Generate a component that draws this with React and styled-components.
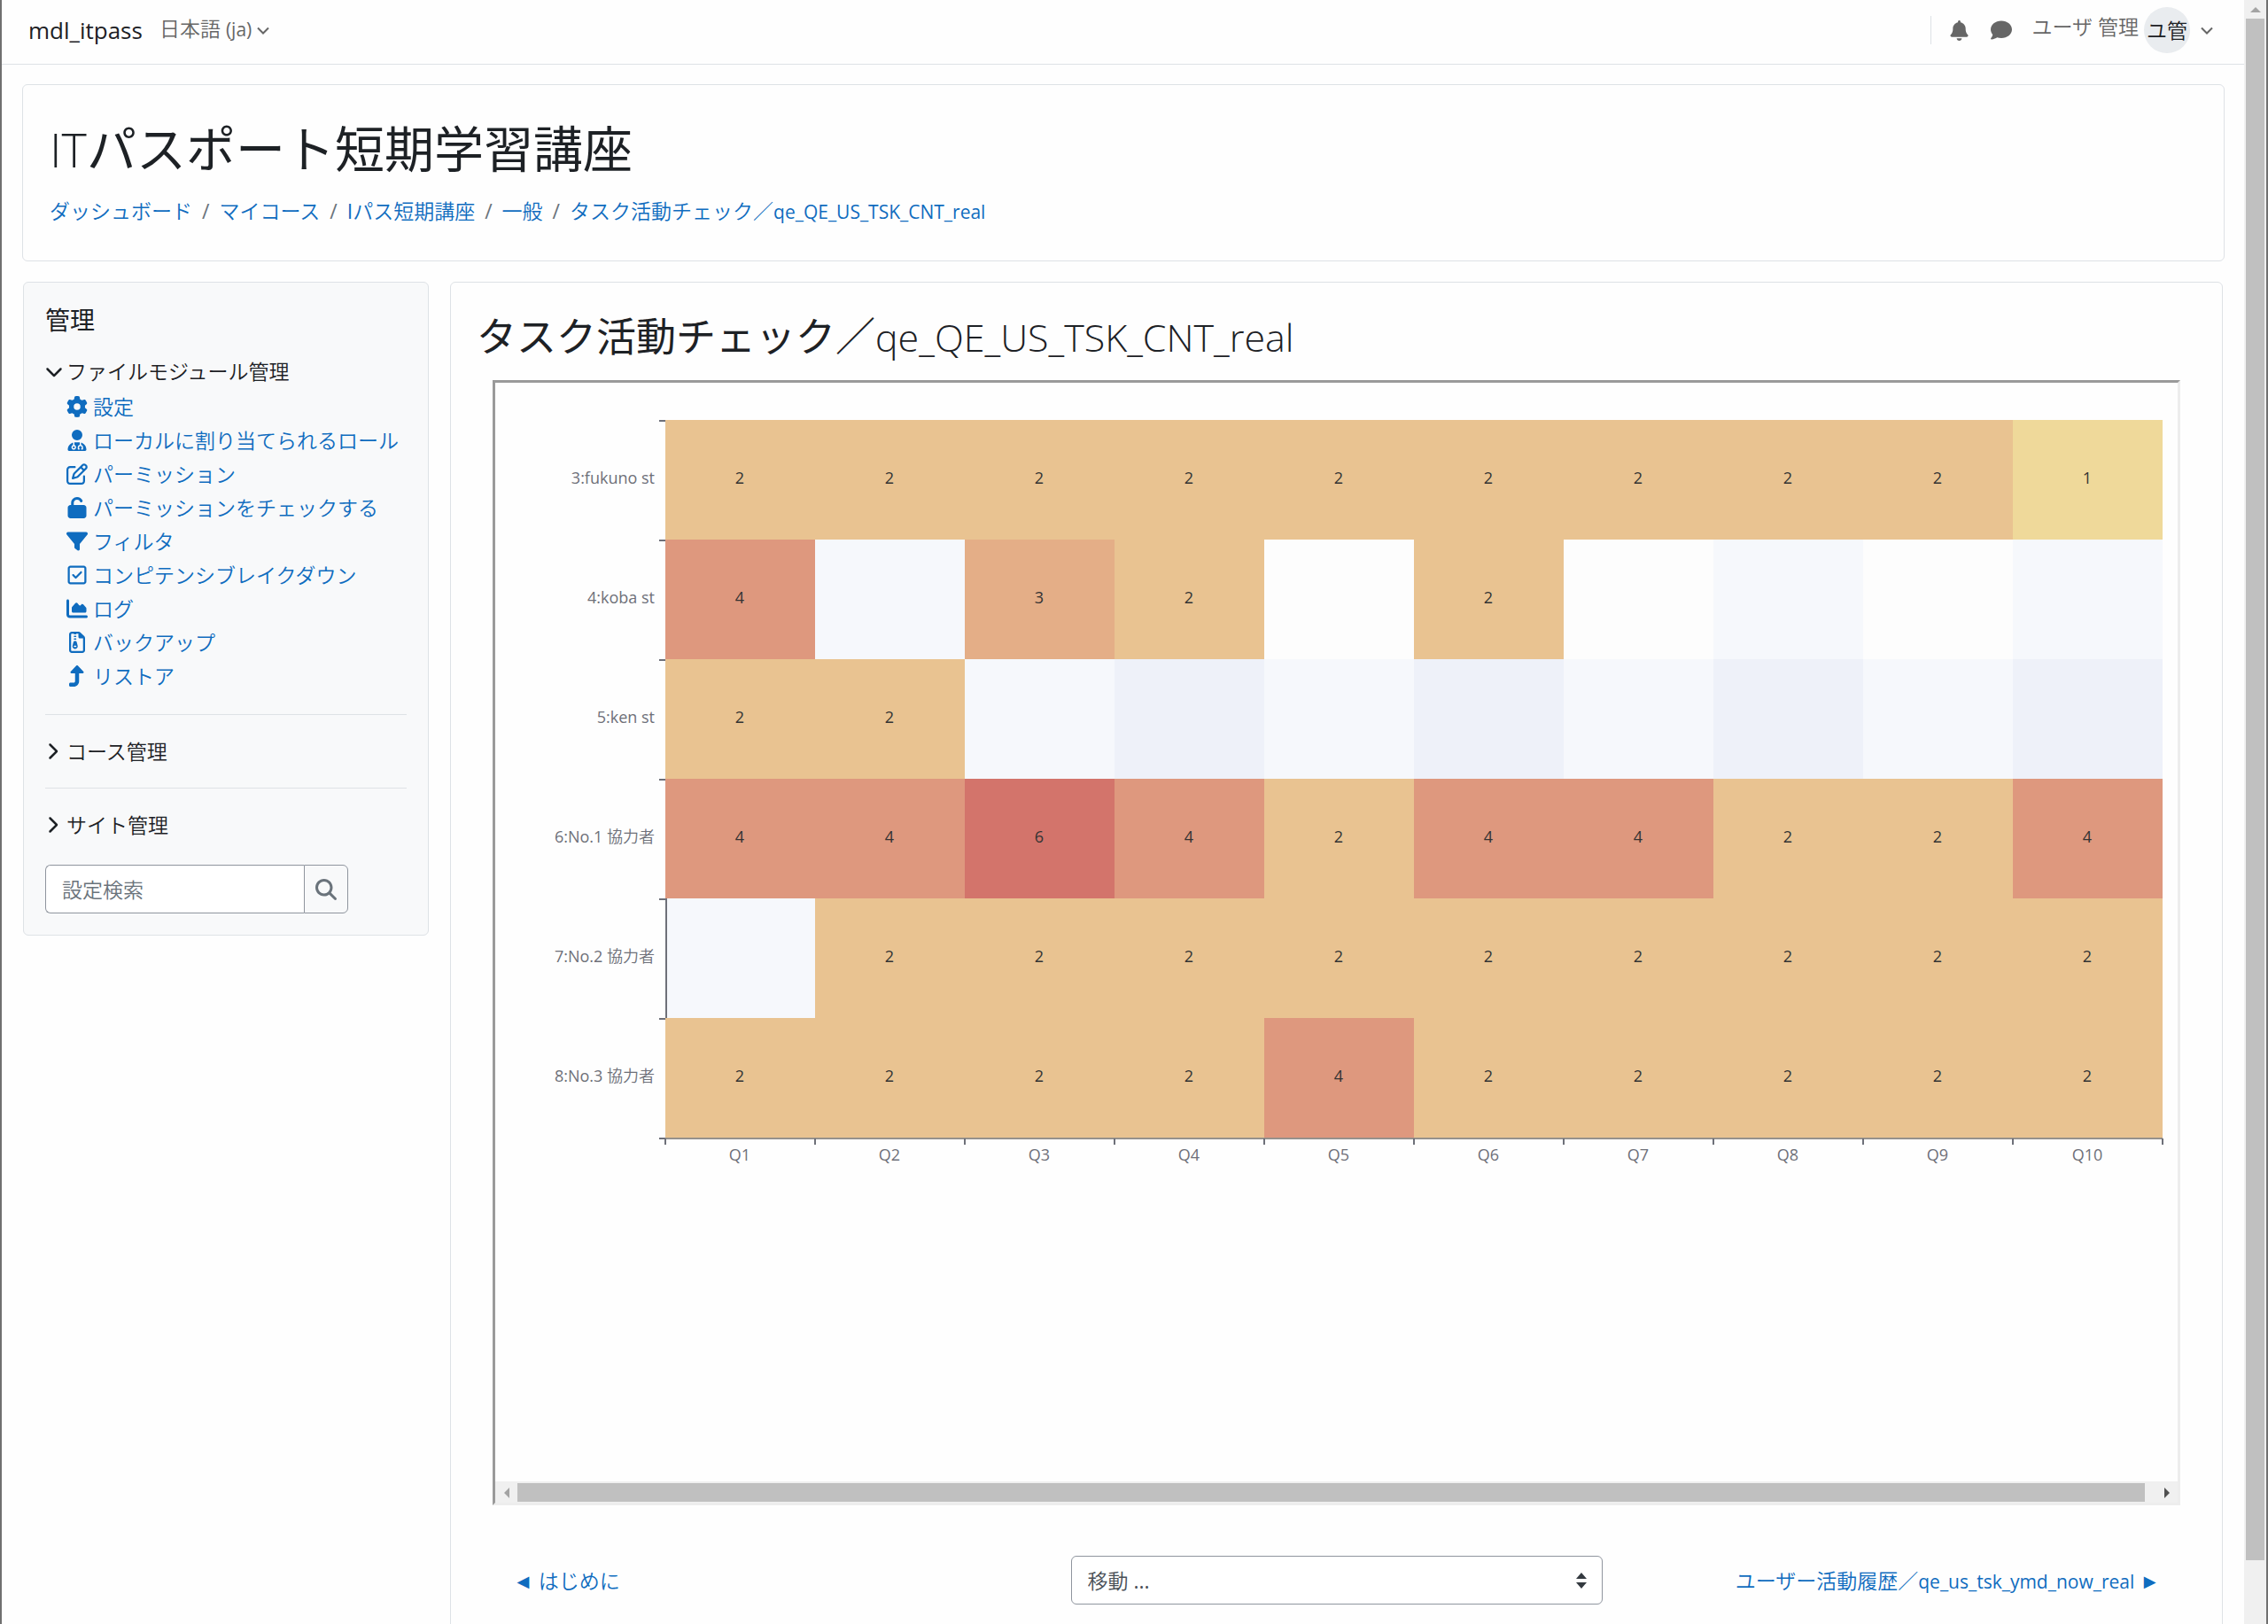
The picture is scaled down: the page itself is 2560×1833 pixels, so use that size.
import React from "react";
import styled, { createGlobalStyle } from "styled-components";
import {
  FaBell,
  FaChartArea,
  FaChevronDown,
  FaChevronRight,
  FaComment,
  FaFilter,
  FaGear,
  FaMagnifyingGlass,
  FaRegFileZipper,
  FaRegPenToSquare,
  FaRegSquareCheck,
  FaTurnUp,
  FaUnlock,
  FaUserDoctor,
} from "react-icons/fa6";

const fontStack = '"Open Sans", "Noto Sans CJK JP DemiLight", "Noto Sans CJK JP", sans-serif';
const headingStack = '"Open Sans", "Noto Sans CJK JP", sans-serif';
const color = {
  text: "#1d2125",
  muted: "#6a737b",
  nav: "#666666",
  link: "#0f6cbf",
  line: "#dee2e6",
  control: "#8f959e",
  track: "#f0f0f0",
  thumb: "#c0c0c0",
  axis: "#6e7079",
};

const GlobalStyle = createGlobalStyle`
  *, *::before, *::after { box-sizing: border-box; }
  body {
    margin: 0;
    background: #fefefe;
    color: ${color.text};
    font-family: ${fontStack};
    font-size: 23px;
    line-height: 34px;
  }
  button, input, select { font: inherit; color: inherit; margin: 0; }
  a { color: ${color.link}; text-decoration: none; }
  a:hover { text-decoration: underline; }
`;

const Window = styled.div`
  display: flex;
  height: 100vh;
  overflow: hidden;
  border: solid #707070;
  border-width: 0 2px;
`;

const Page = styled.div`
  flex: 1;
  min-width: 0;
`;

const PageScrollbar = styled.div`
  display: flex;
  flex-direction: column;
  width: 25px;
  padding: 0 2px 72px;
  background: ${color.track};
`;

const ScrollArrow = styled.span`
  display: flex;
  align-items: center;
  justify-content: center;
  flex: none;
  width: ${(p) => (p.$wide ? "25px" : "21px")};
  height: 21px;
`;

const ScrollThumb = styled.div`
  flex: 1;
  background: ${color.thumb};
`;

const Latin = styled.span`
  font-size: 21px;
  line-height: 1;
`;

const TopBar = styled.header`
  display: flex;
  align-items: center;
  justify-content: space-between;
  height: 73px;
  padding: 0 35px 4px 30px;
  border-bottom: 1px solid ${color.line};
`;

const BarGroup = styled.div`
  display: flex;
  align-items: center;
  gap: ${(p) => p.$gap}px;
`;

const Brand = styled.a`
  color: ${color.text};
  font-size: 26px;
`;

const MenuButton = styled.button`
  display: flex;
  align-items: center;
  gap: ${(p) => p.$gap}px;
  padding: 0;
  border: 0;
  background: none;
  color: ${color.nav};
  cursor: pointer;
`;

const MenuText = styled.span`
  padding-bottom: ${(p) => p.$lift}px;
`;

const IconBar = styled.div`
  display: flex;
  align-items: center;
  gap: 24px;
  height: 32px;
  padding-left: 20px;
  border-left: 1px solid ${color.line};
`;

const Avatar = styled.span`
  display: flex;
  align-items: center;
  justify-content: center;
  width: 52px;
  height: 52px;
  margin-right: 6px;
  border-radius: 50%;
  background: #e9ecef;
  color: ${color.text};
  white-space: nowrap;
`;

const Body = styled.div`
  padding: 22px 22px 0 23px;
`;

const Card = styled.section`
  border: 1px solid ${color.line};
  border-radius: 6px;
`;

const PageHeader = styled(Card)`
  height: 200px;
  padding: 37px 30px 0;
`;

const PageTitle = styled.h1`
  margin: 0 0 20px;
  font-family: ${headingStack};
  font-size: 56px;
  font-weight: 400;
  line-height: 68px;
`;

const Thin = styled.span`
  font-size: ${(p) => p.$size}px;
  font-weight: 300;
  line-height: 1;
`;

const Crumbs = styled.ol`
  display: flex;
  margin: 0;
  padding: 0;
  list-style: none;
`;

const Crumb = styled.li`
  & + &::before {
    content: "/";
    padding: 0 11px;
    color: ${color.muted};
  }
`;

const Columns = styled.div`
  display: grid;
  grid-template-columns: 458px minmax(0, 1fr);
  align-items: start;
  gap: 24px;
  padding: 23px 2px 0 1px;
`;

const Sidebar = styled(Card)`
  padding: 24px;
  background: #f8f9fa;
`;

const SideTitle = styled.h2`
  margin: 0 0 23px;
  font-family: ${headingStack};
  font-size: 28px;
  font-weight: 400;
  line-height: 36px;
`;

const TreeToggle = styled.button`
  display: flex;
  align-items: center;
  width: 100%;
  height: 34px;
  padding: 0;
  border: 0;
  background: none;
  cursor: pointer;
`;

const Chevron = styled.span`
  display: flex;
  align-items: center;
  width: 24px;
  svg {
    width: ${(p) => (p.$open ? "20px" : "16px")};
    height: 20px;
  }
`;

const TreeList = styled.ul`
  margin: 4px 0 0;
  padding: 0 0 0 24px;
  list-style: none;
`;

const TreeItem = styled.li`
  display: flex;
  height: 38px;
`;

const TreeLink = styled.a`
  display: flex;
  align-items: center;
  gap: 6px;
  white-space: nowrap;
`;

const Rule = styled.hr`
  margin: 24px 0;
  border: 0;
  border-top: 1px solid ${color.line};
`;

const SearchForm = styled.form`
  display: flex;
  width: 342px;
  height: 55px;
  margin-top: 28px;
`;

const SearchInput = styled.input`
  flex: 1;
  min-width: 0;
  padding: 0 18px;
  border: 1px solid ${color.control};
  border-right: 0;
  border-radius: 6px 0 0 6px;
  background: #fff;
  &::placeholder { color: ${color.muted}; opacity: 1; }
`;

const SearchButton = styled.button`
  display: flex;
  align-items: center;
  justify-content: center;
  width: 50px;
  padding: 0;
  border: 1px solid ${color.control};
  border-radius: 0 6px 6px 0;
  background: #f8f9fa;
  color: ${color.muted};
`;

const Main = styled(Card)`
  min-height: 1600px;
  padding: 32px 47px 0;
`;

const MainTitle = styled.h2`
  margin: 0 -18px 20px;
  font-family: ${headingStack};
  font-size: 45px;
  font-weight: 400;
  line-height: 58px;
`;

const Frame = styled.div`
  border: 3px solid;
  border-color: #9a9a9a #ededed #ededed #9a9a9a;
`;

const FrameScrollbar = styled.div`
  display: flex;
  height: 24px;
  padding: 2px 0 1px;
  background: ${color.track};
`;

const FrameTrack = styled.div`
  display: flex;
  flex: 1;
  padding-right: 12px;
`;

const Chart = styled.svg`
  display: block;
  width: 100%;
  height: auto;
  font-size: 18px;
  font-family: ${fontStack};
`;

const ActivityNav = styled.nav`
  display: grid;
  grid-template-columns: 1fr 600px 1fr;
  align-items: center;
  padding: 57px 23px 0;
`;

const NavCell = styled.div`
  text-align: ${(p) => p.$align};
  white-space: nowrap;
`;

const SelectBox = styled.div`
  position: relative;
`;

const JumpSelect = styled.select`
  display: block;
  width: 100%;
  height: 55px;
  padding: 0 18px;
  appearance: none;
  border: 1px solid ${color.control};
  border-radius: 6px;
  background: #fff;
  color: #495057;
`;

const SelectArrows = styled.svg`
  position: absolute;
  top: 19px;
  right: 18px;
  pointer-events: none;
`;

const adminLinks = [
  { icon: FaGear, label: "設定" },
  { icon: FaUserDoctor, label: "ローカルに割り当てられるロール" },
  { icon: FaRegPenToSquare, label: "パーミッション" },
  { icon: FaUnlock, label: "パーミッションをチェックする" },
  { icon: FaFilter, label: "フィルタ" },
  { icon: FaRegSquareCheck, label: "コンピテンシブレイクダウン" },
  { icon: FaChartArea, label: "ログ" },
  { icon: FaRegFileZipper, label: "バックアップ" },
  { icon: FaTurnUp, label: "リストア" },
];

const crumbs = [
  { label: "ダッシュボード" },
  { label: "マイコース" },
  { label: "Iパス短期講座" },
  { label: "一般" },
  { label: "タスク活動チェック／", latin: "qe_QE_US_TSK_CNT_real" },
];

const rows = [
  { name: "3:fukuno st", values: [2, 2, 2, 2, 2, 2, 2, 2, 2, 1] },
  { name: "4:koba st", values: [4, 0, 3, 2, 0, 2, 0, 0, 0, 0] },
  { name: "5:ken st", values: [2, 2, 0, 0, 0, 0, 0, 0, 0, 0] },
  { name: "6:No.1 協力者", values: [4, 4, 6, 4, 2, 4, 4, 2, 2, 4] },
  { name: "7:No.2 協力者", values: [0, 2, 2, 2, 2, 2, 2, 2, 2, 2] },
  { name: "8:No.3 協力者", values: [2, 2, 2, 2, 4, 2, 2, 2, 2, 2] },
];

const heat = { 1: "#efd99a", 2: "#e9c391", 3: "#e4ae87", 4: "#de987e", 6: "#d3746b" };
const bands = ["#fdfdfd", "#f6f8fc", "#eef1f9"];
const plot = { x: 192, y: 42, cellWidth: 169, cellHeight: 135 };
const colX = (c) => plot.x + c * plot.cellWidth;
const rowY = (r) => plot.y + r * plot.cellHeight;

function ThinChevron() {
  return (
    <svg width="14" height="9" viewBox="0 0 14 9" fill="none" stroke="currentColor" strokeWidth="2">
      <path d="M1 1.5l6 6 6-6" />
    </svg>
  );
}

function Triangle({ direction, dark }) {
  const shape = { up: "M0 6l6-6 6 6z", left: "M6 0v12L0 6z", right: "M0 0v12l6-6z" }[direction];
  const flat = direction === "up";
  return (
    <svg width={flat ? 12 : 6} height={flat ? 6 : 12} fill={dark ? "#505050" : "#a3a3a3"}>
      <path d={shape} />
    </svg>
  );
}

function HeatMap() {
  const bottom = rowY(rows.length);
  const columns = rows[0].values.length;
  return (
    <Chart viewBox="0 0 1899 1240" role="img" aria-label="タスク活動チェック">
      {rows.map((row, r) =>
        row.values.map((value, c) => (
          <rect
            key={`${r}-${c}`}
            x={colX(c)}
            y={rowY(r)}
            width={plot.cellWidth}
            height={plot.cellHeight}
            fill={value ? heat[value] : bands[(r % 2 === 0 ? 1 : 0) + (c % 2)]}
            shapeRendering="crispEdges"
          />
        ))
      )}
      <path d={`M${plot.x + 1} ${rowY(4)}V${rowY(5)}`} stroke={color.axis} strokeWidth="2" />
      <path d={`M${plot.x} ${bottom + 1}H${colX(columns)}`} stroke="#96918c" strokeWidth="2" />
      {Array.from({ length: rows.length + 1 }, (_, r) => (
        <path key={r} d={`M${plot.x - 7} ${rowY(r) + 1}H${plot.x}`} stroke={color.axis} strokeWidth="2" />
      ))}
      {Array.from({ length: columns + 1 }, (_, c) => (
        <path key={c} d={`M${colX(c)} ${bottom + 1}V${bottom + 8}`} stroke={color.axis} strokeWidth="2" />
      ))}
      {rows.map((row, r) => (
        <text key={row.name} x="180" y={rowY(r) + 72} textAnchor="end" fill={color.axis}>
          {row.name}
        </text>
      ))}
      {rows.map((row, r) =>
        row.values.map((value, c) =>
          value ? (
            <text key={`${r}-${c}`} x={colX(c) + 84} y={rowY(r) + 72} textAnchor="middle" fill="#333">
              {value}
            </text>
          ) : null
        )
      )}
      {rows[0].values.map((_, c) => (
        <text key={c} x={colX(c) + 84} y={bottom + 26} textAnchor="middle" fill={color.axis}>
          {`Q${c + 1}`}
        </text>
      ))}
    </Chart>
  );
}

export default function App() {
  return (
    <Window>
      <GlobalStyle />
      <Page>
        <TopBar>
          <BarGroup $gap={19}>
            <Brand href="#">mdl_itpass</Brand>
            <MenuButton type="button" $gap={6}>
              <MenuText $lift={4}>
                日本語 <Latin>(ja)</Latin>
              </MenuText>
              <ThinChevron />
            </MenuButton>
          </BarGroup>
          <BarGroup $gap={22}>
            <IconBar>
              <MenuButton type="button" aria-label="通知" $gap={0}>
                <FaBell size={23} />
              </MenuButton>
              <MenuButton type="button" aria-label="メッセージ" $gap={0}>
                <FaComment size={24} />
              </MenuButton>
            </IconBar>
            <MenuButton type="button" $gap={6}>
              <MenuText $lift={8}>ユーザ 管理</MenuText>
              <Avatar>ユ管</Avatar>
              <ThinChevron />
            </MenuButton>
          </BarGroup>
        </TopBar>
        <Body>
          <PageHeader as="header">
            <PageTitle>
              <Thin $size={54}>IT</Thin>パスポート短期学習講座
            </PageTitle>
            <Crumbs>
              {crumbs.map(({ label, latin }) => (
                <Crumb key={label}>
                  <a href="#">
                    {label}
                    {latin && <Latin>{latin}</Latin>}
                  </a>
                </Crumb>
              ))}
            </Crumbs>
          </PageHeader>
          <Columns>
            <Sidebar as="aside">
              <SideTitle>管理</SideTitle>
              <TreeToggle type="button" aria-expanded="true">
                <Chevron $open>
                  <FaChevronDown />
                </Chevron>
                ファイルモジュール管理
              </TreeToggle>
              <TreeList>
                {adminLinks.map(({ icon: Icon, label }) => (
                  <TreeItem key={label}>
                    <TreeLink href="#">
                      <Icon size={24} />
                      {label}
                    </TreeLink>
                  </TreeItem>
                ))}
              </TreeList>
              <Rule />
              <TreeToggle type="button" aria-expanded="false">
                <Chevron>
                  <FaChevronRight />
                </Chevron>
                コース管理
              </TreeToggle>
              <Rule />
              <TreeToggle type="button" aria-expanded="false">
                <Chevron>
                  <FaChevronRight />
                </Chevron>
                サイト管理
              </TreeToggle>
              <SearchForm role="search">
                <SearchInput type="text" placeholder="設定検索" aria-label="設定検索" />
                <SearchButton type="button" aria-label="検索">
                  <FaMagnifyingGlass size={24} />
                </SearchButton>
              </SearchForm>
            </Sidebar>
            <Main as="main">
              <MainTitle>
                タスク活動チェック／<Thin $size={43}>qe_QE_US_TSK_CNT_real</Thin>
              </MainTitle>
              <Frame>
                <HeatMap />
                <FrameScrollbar>
                  <ScrollArrow $wide>
                    <Triangle direction="left" />
                  </ScrollArrow>
                  <FrameTrack>
                    <ScrollThumb />
                  </FrameTrack>
                  <ScrollArrow $wide>
                    <Triangle direction="right" dark />
                  </ScrollArrow>
                </FrameScrollbar>
              </Frame>
              <ActivityNav>
                <NavCell $align="left">
                  <a href="#">◄ はじめに</a>
                </NavCell>
                <SelectBox>
                  <JumpSelect aria-label="移動 ..." defaultValue="">
                    <option value="">移動 ...</option>
                  </JumpSelect>
                  <SelectArrows width="12" height="18" viewBox="0 0 12 18" fill="#343a40">
                    <path d="M0 7l6-7 6 7zM0 11l6 7 6-7z" />
                  </SelectArrows>
                </SelectBox>
                <NavCell $align="right">
                  <a href="#">
                    ユーザー活動履歴／<Latin>qe_us_tsk_ymd_now_real</Latin> ►
                  </a>
                </NavCell>
              </ActivityNav>
            </Main>
          </Columns>
        </Body>
      </Page>
      <PageScrollbar>
        <ScrollArrow>
          <Triangle direction="up" />
        </ScrollArrow>
        <ScrollThumb />
      </PageScrollbar>
    </Window>
  );
}
